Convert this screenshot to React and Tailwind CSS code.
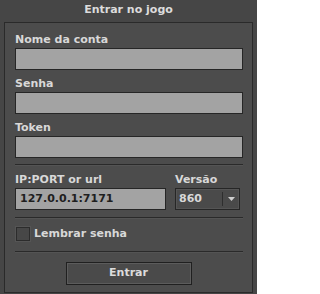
const font = { fontFamily: '"DejaVu Sans", Verdana, sans-serif' }

function Label({ children }) {
  return (
    <div className="h-[12px] leading-[12px] text-[11px] font-bold text-[#d8d8d8] mb-[2px] whitespace-nowrap">
      {children}
    </div>
  )
}

function TextInput({ value, className = '' }) {
  return (
    <div
      className={`h-[22px] border border-[#262626] bg-[#a3a3a3] px-[4px] text-[11px] leading-[20px] font-bold text-[#1f1f1f] ${className}`}
    >
      {value}
    </div>
  )
}

function Separator() {
  return <div className="h-[1px] bg-[#2a2a2a] border-b border-[#545454] box-content" />
}

export default function App() {
  return (
    <div
      className="w-[257px] h-[294px] bg-[#464646] px-[4px] flex flex-col select-none"
      style={font}
    >
      {/* title bar */}
      <div className="h-[22px] flex items-center justify-center text-[11px] font-bold text-[#dcdcdc] pb-[1px]">
        Entrar no jogo
      </div>

      <div className="h-[271px] border border-[#2a2a2a] bg-[#4c4c4c] pl-[10px] pr-[9px] pt-[11px] flex flex-col">
        <Label>Nome da conta</Label>
        <TextInput />

        <div className="mt-[8px]" />
        <Label>Senha</Label>
        <TextInput />

        <div className="mt-[8px]" />
        <Label>Token</Label>
        <TextInput />

        <div className="mt-[6px]" />
        <Separator />

        <div className="mt-[8px] flex gap-[9px]">
          <div className="w-[151px]">
            <Label>IP:PORT or url</Label>
            <TextInput value="127.0.0.1:7171" />
          </div>
          <div className="w-[65px]">
            <Label>Versão</Label>
            <div className="h-[22px] border border-[#262626] bg-[#4a4a4a] flex items-center shadow-[inset_0_0_0_1px_#555]">
              <span className="flex-1 pl-[3px] text-[11px] font-bold text-[#d8d8d8]">860</span>
              <div className="w-[1px] h-[14px] bg-[#2e2e2e]" />
              <div className="w-[16px] flex items-center justify-center">
                <svg width="7" height="4" viewBox="0 0 7 4">
                  <path d="M0 0h7L3.5 4z" fill="#cfcfcf" />
                </svg>
              </div>
            </div>
          </div>
        </div>

        <div className="mt-[7px]" />
        <Separator />

        <div className="mt-[7px] flex items-center h-[16px] pl-[1px]">
          <div className="w-[14px] h-[14px] border border-[#2c2c2c] bg-[#474747] shadow-[0_0_0_1px_#555]" />
          <span className="ml-[4px] text-[11px] font-bold text-[#d8d8d8]">Lembrar senha</span>
        </div>

        <div className="mt-[9px]" />
        <Separator />

        <div className="mt-[9px] flex justify-center pr-[1px]">
          <div className="w-[126px] h-[23px] border border-[#202020] bg-[#4a4a4a] shadow-[inset_0_0_0_1px_#5c5c5c] flex items-center justify-center text-[11px] font-bold text-[#dcdcdc]">
            Entrar
          </div>
        </div>
      </div>
    </div>
  )
}
